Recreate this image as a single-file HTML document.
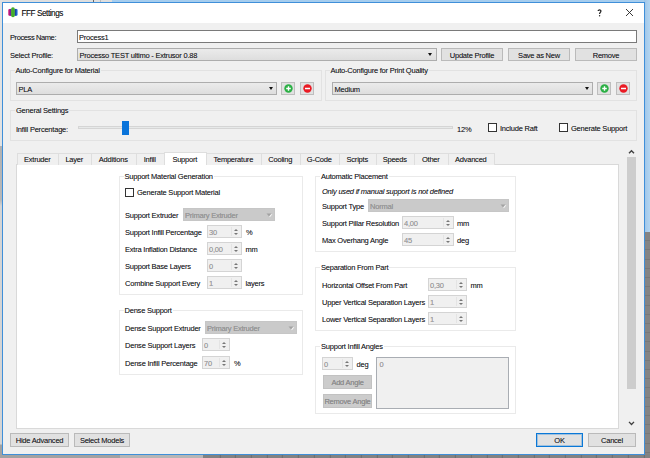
<!DOCTYPE html>
<html>
<head>
<meta charset="utf-8">
<title>FFF Settings</title>
<style>
*{box-sizing:border-box;margin:0;padding:0}
html,body{width:650px;height:458px;overflow:hidden}
body{position:relative;background:#8e8e8e;font-family:"Liberation Sans",sans-serif;font-size:7.5px;letter-spacing:-0.22px;line-height:9px;color:#1c1c24;text-shadow:0 0 0.4px rgba(28,28,40,0.4)}
.a{position:absolute}
.t{position:absolute;white-space:nowrap;line-height:9px;height:9px}
.g{color:#a2a2a2}
#bgTopL{left:0;top:0;width:112px;height:3px;background:#dedede}
#bgTopR{left:112px;top:0;width:538px;height:3px;background:#a6cdee}
#bgRightT{left:644px;top:0;width:6px;height:232px;background:linear-gradient(90deg,#9fc4e6 0,#a9cdec 50%,#b2d5f1 100%)}
#bgRightB{left:644px;top:232px;width:6px;height:226px;background:repeating-linear-gradient(180deg,#848484 0,#848484 8.2px,#787878 8.2px,#787878 9.2px)}
#bgLeftT{left:0;top:0;width:3px;height:146px;background:#e2e2e2}
#bgLeftB{left:0;top:146px;width:3px;height:312px;background:linear-gradient(180deg,#b2b2b2 0,#b8b8b8 54px,#d4d4d4 60px,#d4d4d4 298px,#a2a2a2 299px)}
#bgBot{left:0;top:454px;width:650px;height:4px;background:#a2a2a2}
#bgBot2{left:120px;top:454px;width:83px;height:4px;background:#b6b6b6}
#bgBot3{left:203px;top:454px;width:447px;height:4px;background:repeating-linear-gradient(90deg,#828282 0,#828282 14.7px,#6c6c6c 14.7px,#6c6c6c 15.7px);background-position:1.8px 0}
#win{left:2px;top:2px;width:643px;height:453px;background:#f0f0f0;border:1px solid #3f8fd9}
#title{left:3px;top:3px;width:641px;height:20px;background:#fff}
.gb{position:absolute;border:1px solid #e2e2e2}
.gb.w{border-color:#eaeaea}
.gbl{position:absolute;white-space:nowrap;line-height:9px;height:9px;padding:0 1px}
.onf{background:#f0f0f0}
.onw{background:#fff}
.combo{position:absolute;border:1px solid #adadad;background:linear-gradient(#ebebeb,#dedede);height:13px}
.arr{position:absolute;width:0;height:0;border-left:2.5px solid transparent;border-right:2.5px solid transparent;border-top:3px solid #111}
.btn{position:absolute;border:1px solid #bababa;background:#e1e1e1;height:13px}
.btn .t,.dbtn .t{left:-2px;right:0;text-align:center}
.sq{position:absolute;width:14px;height:13px;border:1px solid #bebebe;background:#e1e1e1}
.chk{position:absolute;width:9px;height:9px;border:1px solid #333;background:#fff}
.tab{position:absolute;top:153px;height:12px;border:1px solid #dedede;border-bottom:none;background:#f0f0f0}
.tab .t{left:-1.5px;right:0;text-align:center}
.dcombo{position:absolute;height:13px;background:#cacaca;border:1px solid #c6c6c6}
.dcombo .t{color:#9b9b9b}
.darr{position:absolute;width:0;height:0;border-left:2.5px solid transparent;border-right:2.5px solid transparent;border-top:3px solid #a8a8a8}
.spin{position:absolute;height:13px;background:#f0f0f0;border:1px solid #d4d4d4}
.spin .t{color:#a2a2a2}
.spin i{position:absolute;right:3.2px;width:0;height:0;border-left:2px solid transparent;border-right:2px solid transparent}
.spin i.u{top:2.5px;border-bottom:2.3px solid #777}
.spin i.d{top:6.8px;border-top:2.3px solid #777}
.spin b{position:absolute;right:9px;top:1px;bottom:1px;width:1px;background:#e4e4e4}
.dbtn{position:absolute;height:13px;background:#cccccc;border:1px solid #c2c2c2;color:#8e8e8e}
</style>
</head>
<body>
<div class="a" id="bgTopL"></div>
<div class="a" id="bgTopR"></div>
<div class="a" id="bgRightT"></div>
<div class="a" id="bgRightB"></div>
<div class="a" id="bgLeftT"></div>
<div class="a" id="bgLeftB"></div>
<div class="a" id="bgBot"></div>
<div class="a" id="bgBot2"></div>
<div class="a" id="bgBot3"></div>
<div class="a" style="left:93px;top:0;width:1px;height:2px;background:#666"></div>
<div class="a" style="left:100px;top:0;width:1px;height:2px;background:#bbb"></div>
<div class="a" id="win"></div><div class="a" id="title"></div>
<svg class="a" style="left:8px;top:7px" width="10" height="11" viewBox="0 0 10 11">
  <rect x="0.3" y="1.9" width="3.2" height="6.8" rx="1.2" fill="#cf1677"/>
  <rect x="1.7" y="1.9" width="1.8" height="6.8" fill="#6d259c"/>
  <rect x="6.5" y="1.9" width="3.1" height="6.8" rx="1.2" fill="#2b78dc"/>
  <rect x="6.5" y="1.9" width="1.9" height="6.8" fill="#1a3fa6"/>
  <rect x="3.1" y="0.3" width="3.7" height="10" rx="1.8" fill="#43ad2c"/>
</svg>
<div class="t" style="left:21.5px;top:9px;font-size:8.2px;letter-spacing:-0.45px;line-height:10px;height:10px;color:#111">FFF Settings</div>
<svg class="a" style="left:597.2px;top:8.6px" width="5" height="8" viewBox="0 0 5 8"><path d="M1.2 2.1 C1.2 0.5 3.9 0.5 3.9 2.1 C3.9 3.5 2.6 3.4 2.6 5.1" stroke="#222" stroke-width="1.25" fill="none"/><circle cx="2.6" cy="6.7" r="0.7" fill="#222"/></svg>
<svg class="a" style="left:625px;top:8px" width="9" height="9" viewBox="0 0 9 9"><path d="M1 1 L8 8 M8 1 L1 8" stroke="#222" stroke-width="0.9" fill="none"/></svg>
<div class="t" style="left:10px;top:33px;letter-spacing:-0.4px">Process Name:</div>
<div class="a" style="left:77px;top:30px;width:560px;height:13px;background:#fff;border:1px solid #7a7a7a"></div>
<div class="t" style="left:79px;top:33px">Process1</div>
<div class="t" style="left:10px;top:51px">Select Profile:</div>
<div class="combo" style="left:77px;top:48px;width:360px"><div class="t" style="left:1.5px;top:2px">Processo TEST ultimo - Extrusor 0.88</div><div class="arr" style="right:4px;top:3.8px"></div></div>
<div class="btn" style="left:441px;top:48px;width:62px;height:13px"><div class="t" style="left:0px;top:2px">Update Profile</div></div>
<div class="btn" style="left:508px;top:48px;width:62px;height:13px"><div class="t" style="left:0px;top:2px">Save as New</div></div>
<div class="btn" style="left:575px;top:48px;width:62px;height:13px"><div class="t" style="left:0px;top:2px">Remove</div></div>
<div class="gb" style="left:10px;top:70px;width:312px;height:31px"></div>
<div class="gbl onf" style="left:14.5px;top:66px">Auto-Configure for Material</div>
<div class="combo" style="left:16px;top:82px;width:261px"><div class="t" style="left:1.5px;top:2px">PLA</div><div class="arr" style="right:3.5px;top:3.8px"></div></div>
<div class="sq" style="left:281px;top:82px"></div>
<svg class="a" style="left:283.5px;top:83.7px" width="9" height="9" viewBox="0 0 9 9"><circle cx="4.5" cy="4.5" r="4.2" fill="#2bb045"/><path d="M4.5 2.2V6.8M2.2 4.5H6.8" stroke="#fff" stroke-width="1.4"/></svg>
<div class="sq" style="left:300px;top:82px"></div>
<svg class="a" style="left:302.6px;top:83.7px" width="9" height="9" viewBox="0 0 9 9"><circle cx="4.5" cy="4.5" r="4.2" fill="#ea1a24"/><path d="M2 4.5H7" stroke="#fff" stroke-width="1.5"/></svg>
<div class="gb" style="left:325px;top:70px;width:312px;height:31px"></div>
<div class="gbl onf" style="left:329.5px;top:66px">Auto-Configure for Print Quality</div>
<div class="combo" style="left:332px;top:82px;width:261px"><div class="t" style="left:1.5px;top:2px">Medium</div><div class="arr" style="right:3.5px;top:3.8px"></div></div>
<div class="sq" style="left:597px;top:82px"></div>
<svg class="a" style="left:599.5px;top:83.7px" width="9" height="9" viewBox="0 0 9 9"><circle cx="4.5" cy="4.5" r="4.2" fill="#2bb045"/><path d="M4.5 2.2V6.8M2.2 4.5H6.8" stroke="#fff" stroke-width="1.4"/></svg>
<div class="sq" style="left:616px;top:82px"></div>
<svg class="a" style="left:618.6px;top:83.7px" width="9" height="9" viewBox="0 0 9 9"><circle cx="4.5" cy="4.5" r="4.2" fill="#ea1a24"/><path d="M2 4.5H7" stroke="#fff" stroke-width="1.5"/></svg>
<div class="gb" style="left:10px;top:110px;width:627px;height:31px"></div>
<div class="gbl onf" style="left:15px;top:106px">General Settings</div>
<div class="t" style="left:16px;top:125px">Infill Percentage:</div>
<div class="a" style="left:78px;top:126px;width:375px;height:3px;background:#e7e9e9;border:1px solid #d5d5d5"></div>
<div class="a" style="left:122px;top:121px;width:7px;height:14px;background:#0a74da"></div>
<div class="t" style="left:457px;top:125px">12%</div>
<div class="chk" style="left:488px;top:123px"></div>
<div class="t" style="left:500px;top:124px">Include Raft</div>
<div class="chk" style="left:559px;top:123px"></div>
<div class="t" style="left:571px;top:124px">Generate Support</div>
<div class="a" style="left:626px;top:146px;width:11px;height:283px;background:#f0f0f0"></div>
<div class="a" style="left:627px;top:157px;width:9px;height:232px;background:#cdcdcd"></div>
<svg class="a" style="left:628px;top:149px" width="7" height="5" viewBox="0 0 7 5"><path d="M1 4.3 L3.5 1.7 L6 4.3" stroke="#404040" stroke-width="1.35" fill="none"/></svg>
<svg class="a" style="left:628px;top:421px" width="7" height="5" viewBox="0 0 7 5"><path d="M1 0.9 L3.5 3.5 L6 0.9" stroke="#404040" stroke-width="1.35" fill="none"/></svg>
<div class="a" style="left:16px;top:164px;width:603px;height:265px;background:#fff;border:1px solid #d9d9d9"></div>
<div class="tab" style="left:17px;width:42px"><div class="t" style="top:1px">Extruder</div></div>
<div class="tab" style="left:58px;width:34px"><div class="t" style="top:1px">Layer</div></div>
<div class="tab" style="left:91px;width:46px"><div class="t" style="top:1px">Additions</div></div>
<div class="tab" style="left:136px;width:29px"><div class="t" style="top:1px">Infill</div></div>
<div class="tab" style="left:206px;width:56px"><div class="t" style="top:1px">Temperature</div></div>
<div class="tab" style="left:261px;width:40px"><div class="t" style="top:1px">Cooling</div></div>
<div class="tab" style="left:300px;width:40px"><div class="t" style="top:1px">G-Code</div></div>
<div class="tab" style="left:339px;width:38px"><div class="t" style="top:1px">Scripts</div></div>
<div class="tab" style="left:376px;width:39px"><div class="t" style="top:1px">Speeds</div></div>
<div class="tab" style="left:414px;width:35px"><div class="t" style="top:1px">Other</div></div>
<div class="tab" style="left:448px;width:47px"><div class="t" style="top:1px">Advanced</div></div>
<div class="tab" style="left:164px;width:43px;top:152px;height:13px;background:#fff"><div class="t" style="top:2px">Support</div></div>
<div class="gb w" style="left:119px;top:176px;width:184px;height:119px"></div>
<div class="gbl onw" style="left:123.5px;top:172px">Support Material Generation</div>
<div class="chk" style="left:125px;top:188px"></div>
<div class="t" style="left:137px;top:188px">Generate Support Material</div>
<div class="t" style="left:125px;top:211px">Support Extruder</div>
<div class="dcombo" style="left:183px;top:208px;width:92px"><div class="t" style="left:1px;top:2px">Primary Extruder</div><svg class="a" style="right:1.5px;top:3.6px" width="7" height="5" viewBox="0 0 7 5"><path d="M1.4 1.3 L6.4 1.3 L3.9 4.3Z" fill="#f4f4f4"/><path d="M0.5 0.4 L5.5 0.4 L3 3.4Z" fill="#a2a2a2"/></svg></div>
<div class="t" style="left:125px;top:228px">Support Infill Percentage</div>
<div class="spin" style="left:207px;top:225px;width:35px"><div class="t" style="left:1px;top:2px">30</div><b></b><i class="u"></i><i class="d"></i></div>
<div class="t" style="left:246px;top:228px">%</div>
<div class="t" style="left:125px;top:245px">Extra Inflation Distance</div>
<div class="spin" style="left:207px;top:242px;width:35px"><div class="t" style="left:1px;top:2px">0,00</div><b></b><i class="u"></i><i class="d"></i></div>
<div class="t" style="left:245.5px;top:245px">mm</div>
<div class="t" style="left:125px;top:262px">Support Base Layers</div>
<div class="spin" style="left:207px;top:259px;width:35px"><div class="t" style="left:1px;top:2px">0</div><b></b><i class="u"></i><i class="d"></i></div>
<div class="t" style="left:125px;top:279px">Combine Support Every</div>
<div class="spin" style="left:207px;top:276px;width:35px"><div class="t" style="left:1px;top:2px">1</div><b></b><i class="u"></i><i class="d"></i></div>
<div class="t" style="left:245.5px;top:279px">layers</div>
<div class="gb w" style="left:119px;top:310px;width:184px;height:65px"></div>
<div class="gbl onw" style="left:123.5px;top:306px">Dense Support</div>
<div class="t" style="left:125px;top:324px">Dense Support Extruder</div>
<div class="dcombo" style="left:205px;top:321px;width:92px"><div class="t" style="left:1px;top:2px">Primary Extruder</div><svg class="a" style="right:1.5px;top:3.6px" width="7" height="5" viewBox="0 0 7 5"><path d="M1.4 1.3 L6.4 1.3 L3.9 4.3Z" fill="#f4f4f4"/><path d="M0.5 0.4 L5.5 0.4 L3 3.4Z" fill="#a2a2a2"/></svg></div>
<div class="t" style="left:125px;top:341px">Dense Support Layers</div>
<div class="spin" style="left:202px;top:338px;width:28px"><div class="t" style="left:1px;top:2px">0</div><b></b><i class="u"></i><i class="d"></i></div>
<div class="t" style="left:125px;top:359px">Dense Infill Percentage</div>
<div class="spin" style="left:202px;top:356px;width:28px"><div class="t" style="left:1px;top:2px">70</div><b></b><i class="u"></i><i class="d"></i></div>
<div class="t" style="left:234px;top:359px">%</div>
<div class="gb w" style="left:315px;top:176px;width:201px;height:76px"></div>
<div class="gbl onw" style="left:320px;top:172px">Automatic Placement</div>
<div class="t" style="left:322px;top:187px;font-style:italic">Only used if manual support is not defined</div>
<div class="t" style="left:322px;top:202px">Support Type</div>
<div class="dcombo" style="left:368px;top:199px;width:141px"><div class="t" style="left:1px;top:2px">Normal</div><svg class="a" style="right:1.5px;top:3.6px" width="7" height="5" viewBox="0 0 7 5"><path d="M1.4 1.3 L6.4 1.3 L3.9 4.3Z" fill="#f4f4f4"/><path d="M0.5 0.4 L5.5 0.4 L3 3.4Z" fill="#a2a2a2"/></svg></div>
<div class="t" style="left:322px;top:219px">Support Pillar Resolution</div>
<div class="spin" style="left:402px;top:216px;width:52px"><div class="t" style="left:1px;top:2px">4,00</div><b></b><i class="u"></i><i class="d"></i></div>
<div class="t" style="left:457px;top:219px">mm</div>
<div class="t" style="left:322px;top:236px">Max Overhang Angle</div>
<div class="spin" style="left:402px;top:233px;width:52px"><div class="t" style="left:1px;top:2px">45</div><b></b><i class="u"></i><i class="d"></i></div>
<div class="t" style="left:457px;top:236px">deg</div>
<div class="gb w" style="left:315px;top:267px;width:201px;height:64px"></div>
<div class="gbl onw" style="left:320px;top:263px">Separation From Part</div>
<div class="t" style="left:322px;top:281px">Horizontal Offset From Part</div>
<div class="spin" style="left:428px;top:278px;width:39px"><div class="t" style="left:1px;top:2px">0,30</div><b></b><i class="u"></i><i class="d"></i></div>
<div class="t" style="left:470.5px;top:281px">mm</div>
<div class="t" style="left:322px;top:298px">Upper Vertical Separation Layers</div>
<div class="spin" style="left:428px;top:295px;width:39px"><div class="t" style="left:1px;top:2px">1</div><b></b><i class="u"></i><i class="d"></i></div>
<div class="t" style="left:322px;top:315px">Lower Vertical Separation Layers</div>
<div class="spin" style="left:428px;top:312px;width:39px"><div class="t" style="left:1px;top:2px">1</div><b></b><i class="u"></i><i class="d"></i></div>
<div class="gb w" style="left:315px;top:346px;width:201px;height:68px"></div>
<div class="gbl onw" style="left:320px;top:342px">Support Infill Angles</div>
<div class="spin" style="left:322px;top:357px;width:31px"><div class="t" style="left:1px;top:2px">0</div><b></b><i class="u"></i><i class="d"></i></div>
<div class="t" style="left:356.5px;top:360px">deg</div>
<div class="a" style="left:376px;top:357px;width:133px;height:52px;background:#f0f0f0;border:1px solid #a9adb3"></div>
<div class="t g" style="left:379.5px;top:360px">0</div>
<div class="dbtn" style="left:323px;top:375px;width:49px;height:14px"><div class="t" style="left:0px;top:2px">Add Angle</div></div>
<div class="dbtn" style="left:323px;top:394px;width:49px;height:14px"><div class="t" style="left:0px;top:2px">Remove Angle</div></div>
<div class="btn" style="left:10px;top:433px;width:59px;height:14px"><div class="t" style="left:0px;top:2px">Hide Advanced</div></div>
<div class="btn" style="left:74px;top:433px;width:56px;height:14px"><div class="t" style="left:0px;top:2px">Select Models</div></div>
<div class="btn" style="left:536px;top:433px;width:47px;height:14px;border-color:#0a78d7;box-shadow:inset 0 0 0 1px rgba(10,120,215,0.3)"><div class="t" style="left:0px;top:2px">OK</div></div>
<div class="btn" style="left:588px;top:433px;width:48px;height:14px"><div class="t" style="left:0px;top:2px">Cancel</div></div>
</body>
</html>
